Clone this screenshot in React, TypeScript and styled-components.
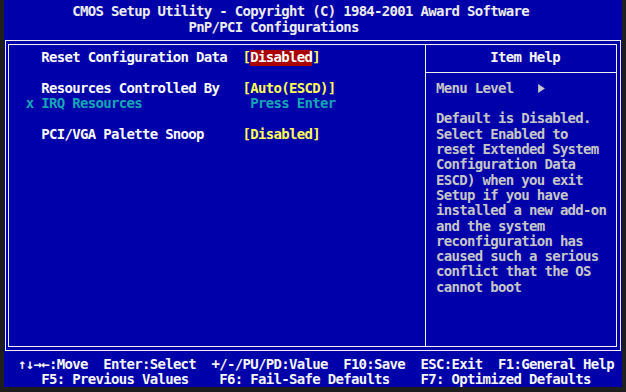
import styled, { createGlobalStyle } from "styled-components";

// BIOS text grid: 80 columns x 25 rows, scaled to the screenshot
const CW = 7.74;
const LH = 15.3;
const cols = (n: number) => `${(n * CW).toFixed(2)}px`;

const GlobalStyle = createGlobalStyle`
  html, body {
    margin: 0;
    padding: 0;
    background: #1e1e1e;
  }
`;

const Screen = styled.div`
  width: 618px;
  height: 387px;
  margin-left: 4px;
  background: #0000aa;
  display: flex;
  flex-direction: column;
  font-family: "DejaVu Sans Mono", "Liberation Mono", monospace;
  font-weight: bold;
  font-size: 14px;
  line-height: ${LH}px;
  letter-spacing: -0.69px;
  color: #f6f6f6;
  white-space: pre;
`;

const Header = styled.header`
  padding-top: 4.35px;
  color: #ececec;
`;

const HeaderLine = styled.div<{ $left: number }>`
  padding-left: ${(p) => p.$left}px;
  height: ${LH}px;
`;

const Frame = styled.div`
  margin: 5.05px 1px 0 1px;
  border: 1px solid #f0f0f0;
  padding: 3px 3px 3px 2px;
`;

const Inner = styled.div`
  border: 1px solid #f0f0f0;
  height: 301px;
  display: flex;
`;

const SetupPanel = styled.section`
  width: 416px;
  border-right: 1px solid #f0f0f0;
  padding-top: 5.25px;
`;

const Row = styled.div`
  display: flex;
  height: ${LH}px;
  padding-left: 16.85px;
`;

const Marker = styled.span`
  width: ${cols(2)};
  color: #14a6b6;
`;

const Label = styled.span<{ $locked?: boolean }>`
  width: ${cols(26)};
  color: ${(p) => (p.$locked ? "#14a6b6" : "#fafafa")};
`;

const Value = styled.span<{ $locked?: boolean }>`
  color: ${(p) => (p.$locked ? "#14a6b6" : "#ffff55")};
  padding-left: ${(p) => (p.$locked ? cols(1) : "0")};
`;

const Selected = styled.span`
  display: inline-block;
  background: #aa0000;
  color: #ffffff;
`;

const HelpPanel = styled.aside`
  flex: 1;
  display: flex;
  flex-direction: column;
`;

const HelpTitle = styled.div`
  height: 21.75px;
  padding-top: 5.25px;
  padding-left: 64.25px;
  border-bottom: 1px solid #f0f0f0;
  color: #f6f6f6;
`;

const HelpBody = styled.div`
  padding-top: 7.85px;
  padding-left: 10.07px;
  color: #c6c6c6;
`;

const HelpLine = styled.div`
  height: ${LH}px;
  display: flex;
  align-items: center;
`;

const Arrow = styled.svg`
  margin-left: ${cols(3)};
  padding-left: 1px;
`;

const Footer = styled.footer`
  padding-top: 5.6px;
  line-height: ${LH}px;
`;

const FooterRow = styled.div<{ $left: number; $gap?: number }>`
  display: flex;
  height: ${LH}px;
  padding-left: ${(p) => p.$left}px;
  gap: ${(p) => cols(p.$gap ?? 0)};
`;

const FooterKey = styled.span<{ $width?: number }>`
  width: ${(p) => (p.$width ? cols(p.$width) : "auto")};
`;

const helpText = [
  "Default is Disabled.",
  "Select Enabled to",
  "reset Extended System",
  "Configuration Data",
  "ESCD) when you exit",
  "Setup if you have",
  "installed a new add-on",
  "and the system",
  "reconfiguration has",
  "caused such a serious",
  "conflict that the OS",
  "cannot boot",
];

const hints = [
  "↑↓→←:Move",
  "Enter:Select",
  "+/-/PU/PD:Value",
  "F10:Save",
  "ESC:Exit",
  "F1:General Help",
];

export default function App() {
  return (
    <>
      <GlobalStyle />
      <Screen>
        <Header>
          <HeaderLine $left={68.3}>
            CMOS Setup Utility - Copyright (C) 1984-2001 Award Software
          </HeaderLine>
          <HeaderLine $left={184.4}>PnP/PCI Configurations</HeaderLine>
        </Header>
        <Frame>
          <Inner>
            <SetupPanel>
              <Row>
                <Marker />
                <Label>Reset Configuration Data</Label>
                <Value>
                  [<Selected>Disabled</Selected>]
                </Value>
              </Row>
              <Row />
              <Row>
                <Marker />
                <Label>Resources Controlled By</Label>
                <Value>[Auto(ESCD)]</Value>
              </Row>
              <Row>
                <Marker>x</Marker>
                <Label $locked>IRQ Resources</Label>
                <Value $locked>Press Enter</Value>
              </Row>
              <Row />
              <Row>
                <Marker />
                <Label>PCI/VGA Palette Snoop</Label>
                <Value>[Disabled]</Value>
              </Row>
            </SetupPanel>
            <HelpPanel>
              <HelpTitle>Item Help</HelpTitle>
              <HelpBody>
                <HelpLine>
                  Menu Level
                  <Arrow width="7" height="9" viewBox="0 0 6 8">
                    <polygon points="0,0 6,4 0,8" fill="#c6c6c6" />
                  </Arrow>
                </HelpLine>
                <HelpLine />
                {helpText.map((line) => (
                  <HelpLine key={line}>{line}</HelpLine>
                ))}
              </HelpBody>
            </HelpPanel>
          </Inner>
        </Frame>
        <Footer>
          <FooterRow $left={14.11} $gap={2}>
            {hints.map((h) => (
              <FooterKey key={h}>{h}</FooterKey>
            ))}
          </FooterRow>
          <FooterRow $left={37.33}>
            <FooterKey $width={23}>F5: Previous Values</FooterKey>
            <FooterKey $width={26}>F6: Fail-Safe Defaults</FooterKey>
            <FooterKey>F7: Optimized Defaults</FooterKey>
          </FooterRow>
        </Footer>
      </Screen>
    </>
  );
}
